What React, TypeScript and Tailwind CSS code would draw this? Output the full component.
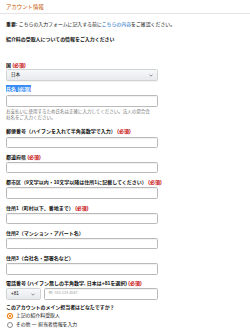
import React from 'react';

const labelText = 'text-[5px] leading-[6px] font-bold text-[#111]';

function Label({ text, required, selected }: { text: string; required?: boolean; selected?: boolean }) {
  if (selected) {
    // the name label shows up with a text selection on it in the capture
    return (
      <div className={labelText}>
        <span className="bg-[#3b8df5] py-[0.5px] text-white">
          {text} (必須)
        </span>
      </div>
    );
  }
  return (
    <div className={labelText}>
      {text}
      {required && <span className="text-[#c40000]"> (必須)</span>}
    </div>
  );
}

function Chevron() {
  return (
    <svg width="4" height="3" viewBox="0 0 4 3" className="shrink-0">
      <path d="M0.5 0.6 L2 2.2 L3.5 0.6" fill="none" stroke="#777" strokeWidth="0.8" />
    </svg>
  );
}

function Input({ className = '' }: { className?: string }) {
  return (
    <div
      className={`w-[152px] rounded-[1.5px] border border-[#b9b9b9] bg-white shadow-[inset_0_1px_1px_rgba(0,0,0,0.06)] ${className}`}
    />
  );
}

function Field({ label, required }: { label: string; required?: boolean }) {
  return (
    <div className="mb-[5.83px]">
      <Label text={label} required={required} />
      <Input className="mt-[2px] h-[11.5px]" />
    </div>
  );
}

function Radio({ checked, label }: { checked?: boolean; label: string }) {
  return (
    <div className="flex h-[8.8px] items-center gap-[2.8px] pl-[1px]">
      {checked ? (
        <span className="flex h-[6px] w-[6px] items-center justify-center rounded-full border border-[#e77600] bg-white shadow-[0_0_1px_#f3b35f]">
          <span className="h-[2.6px] w-[2.6px] rounded-full bg-[#e77600]" />
        </span>
      ) : (
        <span className="h-[6px] w-[6px] rounded-full border border-[#8d8d8d] bg-white" />
      )}
      <span className="text-[4.9px] leading-[6px] text-[#111]">{label}</span>
    </div>
  );
}

export default function App() {
  return (
    <div className="h-[330px] w-[250px] overflow-hidden bg-white font-['Liberation_Sans','Noto_Sans_CJK_JP',sans-serif]">
      {/* Header */}
      <div className="flex h-[14.3px] items-center border-b border-[#e4e4e4] px-[6px] text-[5.4px] text-[#c45500]">
        アカウント情報
      </div>

      <div className="px-[6px]">
        <p className="mt-[7.3px] text-[4.9px] leading-[6px] text-[#111]">
          <b>重要:</b> こちらの入力フォームに記入する前に
          <span className="text-[#0066c0]">こちらの内容</span>をご確認ください。
        </p>
        <p className="mt-[9.7px] text-[4.95px] leading-[6px] font-bold text-[#111]">
          紹介料の受取人についての情報をご入力ください
        </p>

        {/* Country */}
        <div className="mt-[19px]">
          <Label text="国" required />
          <div className="mt-[1px] flex h-[12px] w-[152px] items-center justify-between rounded-[1.5px] border border-[#cfd3d3] bg-gradient-to-b from-[#f7f8fa] to-[#e7e9ec] px-[4px] shadow-[0_1px_0_rgba(0,0,0,0.05)]">
            <span className="text-[4.6px] text-[#111]">日本</span>
            <Chevron />
          </div>
        </div>

        {/* Name */}
        <div className="mt-[4.3px]">
          <Label text="氏名" selected />
          <Input className="mt-[3px] h-[12px]" />
        </div>
        <p className="mt-[2px] text-[4.5px] leading-[6.6px] text-[#767676]">
          お支払いに使用するため氏名は正確に入力してください。法人の場合会
          <br />
          社名をご入力ください。
        </p>

        {/* Postal code */}
        <div className="mt-[6.4px]">
          <Label text="郵便番号（ハイフンを入れて半角英数字で入力）" required />
          <Input className="mt-[2.7px] h-[11.5px]" />
        </div>

        <div className="mt-[5.5px]">
          <Field label="都道府県" required />
          <Field label="都市区（9文字以内・10文字以降は住所1に記載してください）" required />
          <Field label="住所1（町村以下、番地まで）" required />
          <Field label="住所2（マンション・アパート名）" />
          <Field label="住所3（会社名・部署名など）" />

          {/* Phone */}
          <div>
            <Label text="電話番号 (ハイフン無しの半角数字, 日本は+81を選択)" required />
            <div className="mt-[2px] flex h-[11.5px] w-[152px] gap-[3px]">
              <div className="flex h-full w-[35px] items-center justify-between rounded-[1.5px] border border-[#cfd3d3] bg-gradient-to-b from-[#f7f8fa] to-[#e7e9ec] pr-[5px] pl-[4px]">
                <span className="text-[4.6px] text-[#111]">+81</span>
                <Chevron />
              </div>
              <div className="flex h-full flex-1 items-center rounded-[1.5px] border border-[#b9b9b9] bg-white px-[3.5px] shadow-[inset_0_1px_1px_rgba(0,0,0,0.06)]">
                <span className="text-[3.8px] text-[#999]">例: 555 123 4567</span>
              </div>
            </div>
          </div>
        </div>

        <p className="mt-[4.85px] text-[4.95px] leading-[6px] font-bold text-[#111]">
          このアカウントのメイン担当者はどなたですか？
        </p>
        <div className="mt-[0.6px]">
          <Radio checked label="上記の紹介料受取人" />
          <Radio label="その他 — 担当者情報を入力" />
        </div>
      </div>
    </div>
  );
}
